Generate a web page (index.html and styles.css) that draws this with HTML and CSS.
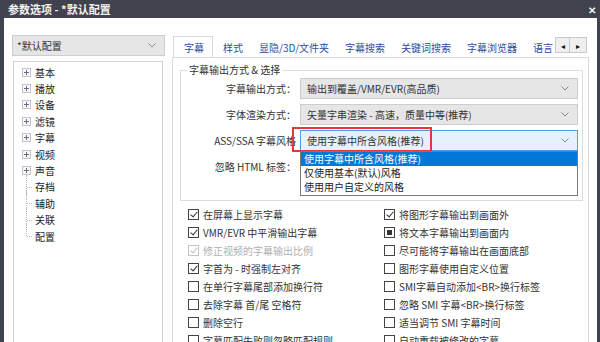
FILE: index.html
```html
<!DOCTYPE html>
<html lang="zh-CN">
<head>
    <meta charset="UTF-8">
    <title>参数选项 - *默认配置</title>
    <link rel="stylesheet" href="styles.css">
</head>
<body>
<div class="window">
    <div class="titlebar">
        <span class="title">参数选项 - *默认配置</span>
        <span class="close">✕</span>
    </div>
    <div class="client">
        <aside class="side">
            <div class="combo profile">
                <span>*默认配置</span>
                <svg class="chev" width="8" height="5" viewBox="0 0 8 5"><path d="M0.5 0.5 L4 4 L7.5 0.5" fill="none" stroke="#888" stroke-width="1"/></svg>
            </div>
            <ul class="tree">
                <li><i class="plus"></i>基本</li>
                <li><i class="plus"></i>播放</li>
                <li><i class="plus"></i>设备</li>
                <li><i class="plus"></i>滤镜</li>
                <li><i class="plus"></i>字幕</li>
                <li><i class="plus"></i>视频</li>
                <li><i class="plus"></i>声音</li>
                <li class="leaf"><i class="branch"></i>存档</li>
                <li class="leaf"><i class="branch"></i>辅助</li>
                <li class="leaf"><i class="branch"></i>关联</li>
                <li class="leaf last"><i class="branch"></i>配置</li>
            </ul>
        </aside>

        <main class="main">
            <div class="tabs">
                <div class="tab-list">
                    <div class="tab active">字幕</div>
                    <div class="tab">样式</div>
                    <div class="tab">显隐/3D/文件夹</div>
                    <div class="tab">字幕搜索</div>
                    <div class="tab">关键词搜索</div>
                    <div class="tab">字幕浏览器</div>
                    <div class="tab">语言</div>
                </div>
                <div class="tab-scroll">
                    <span class="arrow">&#9666;</span><span class="arrow">&#9656;</span>
                </div>
            </div>

            <div class="panel">
                <fieldset class="group">
                    <legend>字幕输出方式 &amp; 选择</legend>
                    <div class="row">
                        <label>字幕输出方式：</label>
                        <div class="combo">
                            <span>输出到覆盖/VMR/EVR(高品质)</span>
                            <svg class="chev" width="8" height="5" viewBox="0 0 8 5"><path d="M0.5 0.5 L4 4 L7.5 0.5" fill="none" stroke="#888" stroke-width="1"/></svg>
                        </div>
                    </div>
                    <div class="row">
                        <label>字体渲染方式：</label>
                        <div class="combo">
                            <span>矢量字串渲染 - 高速，质量中等(推荐)</span>
                            <svg class="chev" width="8" height="5" viewBox="0 0 8 5"><path d="M0.5 0.5 L4 4 L7.5 0.5" fill="none" stroke="#888" stroke-width="1"/></svg>
                        </div>
                    </div>
                    <div class="row">
                        <label>ASS/SSA 字幕风格</label>
                        <div class="combo open">
                            <span>使用字幕中所含风格(推荐)</span>
                            <svg class="chev" width="8" height="5" viewBox="0 0 8 5"><path d="M0.5 0.5 L4 4 L7.5 0.5" fill="none" stroke="#888" stroke-width="1"/></svg>
                            <div class="mark"></div>
                            <ul class="dropdown">
                                <li class="sel">使用字幕中所含风格(推荐)</li>
                                <li>仅使用基本(默认)风格</li>
                                <li>使用用户自定义的风格</li>
                            </ul>
                        </div>
                    </div>
                    <div class="row">
                        <label>忽略 HTML 标签：</label>
                        <div class="combo"></div>
                    </div>
                </fieldset>

                <div class="checks">
                    <div class="check"><i class="box on"></i>在屏幕上显示字幕</div>
                    <div class="check"><i class="box on"></i>将图形字幕输出到画面外</div>
                    <div class="check"><i class="box on"></i>VMR/EVR 中平滑输出字幕</div>
                    <div class="check"><i class="box mixed"></i>将文本字幕输出到画面内</div>
                    <div class="check disabled"><i class="box on"></i>修正视频的字幕输出比例</div>
                    <div class="check"><i class="box"></i>尽可能将字幕输出在画面底部</div>
                    <div class="check"><i class="box on"></i>字首为 - 时强制左对齐</div>
                    <div class="check"><i class="box"></i>图形字幕使用自定义位置</div>
                    <div class="check"><i class="box"></i>在单行字幕尾部添加换行符</div>
                    <div class="check"><i class="box"></i>SMI字幕自动添加&lt;BR&gt;换行标签</div>
                    <div class="check"><i class="box"></i>去除字幕 首/尾 空格符</div>
                    <div class="check"><i class="box"></i>忽略 SMI 字幕&lt;BR&gt;换行标签</div>
                    <div class="check"><i class="box"></i>删除空行</div>
                    <div class="check"><i class="box"></i>适当调节 SMI 字幕时间</div>
                    <div class="check"><i class="box"></i>字幕匹配失败则忽略匹配规则</div>
                    <div class="check"><i class="box"></i>自动重载被修改的字幕</div>
                </div>
            </div>
        </main>
    </div>
</div>
</body>
</html>
```

FILE: styles.css
```css
html, body {
    margin: 0;
    padding: 0;
    height: 342px;
    overflow: hidden;
}

body {
    background: #40424e;
    font-family: "Noto Sans CJK SC", "Liberation Sans", sans-serif;
    font-size: 10px;
    color: #333;
}

.window {
    display: flex;
    flex-direction: column;
    height: 342px;
}

.titlebar {
    height: 18px;
    display: flex;
    align-items: center;
    justify-content: space-between;
    padding: 0 4px 0 8px;
    color: #f2f2f2;
    font-size: 11px;
    font-weight: bold;
}
.titlebar .close {
    font-size: 10px;
    font-weight: bold;
}

.client {
    flex: 1;
    display: flex;
    background: #fff;
    margin: 0 3px 0 4px;
    min-height: 0;
}

/* left side */
.side {
    width: 168px;
    display: flex;
    flex-direction: column;
}

.combo {
    position: relative;
    height: 21px;
    box-sizing: border-box;
    border: 1px solid #cdcdcd;
    background: #e6e6e6;
    display: flex;
    align-items: center;
    padding: 0 6px;
    color: #333;
}
.combo span {
    flex: 1;
    white-space: nowrap;
}
.combo .chev {
    margin-right: 2px;
}

.profile {
    margin: 17px 0 0 8px;
    width: 153px;
    padding-left: 4px;
}

.tree {
    list-style: none;
    margin: 5px 0 0 9px;
    padding: 2px 0 0 8px;
    width: 150px;
    box-sizing: border-box;
    flex: 1;
    border: 1px solid #d2d2d2;
    border-bottom: none;
}
.tree li {
    height: 16.4px;
    display: flex;
    align-items: center;
    position: relative;
    color: #222;
}
.tree .plus {
    width: 7px;
    height: 7px;
    border: 1px solid #c4c4c4;
    margin-right: 4px;
    position: relative;
    background: #f7f7f7;
}
.tree .plus::before {
    content: "";
    position: absolute;
    left: 1px;
    top: 3px;
    width: 5px;
    height: 1px;
    background: #6a6a9a;
}
.tree .plus::after {
    content: "";
    position: absolute;
    left: 3px;
    top: 1px;
    width: 1px;
    height: 5px;
    background: #6a6a9a;
}
.tree .branch {
    width: 9px;
    height: 16.4px;
    margin-right: 4px;
    position: relative;
}
.tree .branch::before {
    content: "";
    position: absolute;
    left: 4px;
    top: -4px;
    height: 20.4px;
    border-left: 1px dotted #b8b8b8;
}
.tree .last .branch::before {
    height: 12px;
}
.tree .branch::after {
    content: "";
    position: absolute;
    left: 5px;
    top: 8px;
    width: 5px;
    border-top: 1px dotted #b8b8b8;
}

/* right side */
.main {
    flex: 1;
    display: flex;
    flex-direction: column;
    padding: 18px 8px 0 0;
    min-width: 0;
}

.tabs {
    display: flex;
    align-items: flex-start;
    height: 21px;
    padding-left: 1px;
}
.tab-list {
    flex: 1;
    min-width: 0;
    height: 21px;
    display: flex;
    align-items: flex-end;
    overflow: hidden;
}
.tab {
    height: 19px;
    line-height: 19px;
    padding: 0 8px;
    white-space: nowrap;
    color: #2b4ba0;
}
.tab.active {
    height: 21px;
    line-height: 21px;
    padding: 0 8px 0 10px;
    border: 1px solid #d9d9d9;
    border-bottom: none;
    background: #fff;
    box-sizing: border-box;
    margin-right: 2px;
}

.tab-scroll {
    display: flex;
    margin: 1px 2px 0 0;
}
.tab-scroll .arrow {
    width: 15px;
    height: 16px;
    box-sizing: border-box;
    border: 1px solid #c9c9c9;
    background: #efefef;
    display: flex;
    align-items: center;
    justify-content: center;
    font-size: 8px;
    color: #111;
}
.tab-scroll .arrow + .arrow {
    border-left: none;
    width: 17px;
}

.panel {
    flex: 1;
    border: 1px solid #d9d9d9;
    border-bottom: none;
    padding: 5px 5px 0 7px;
}

.group {
    margin: 0;
    padding: 1px 4px 23px 0;
    border: 1px solid #dcdcdc;
    display: flex;
    flex-direction: column;
    gap: 5px;
}
.group legend {
    padding: 0 2px;
    margin-left: 6px;
    line-height: 14px;
    color: #333;
}

.row {
    display: flex;
    align-items: center;
    gap: 4px;
}
.row label {
    width: 115px;
    text-align: right;
    white-space: nowrap;
}
.row .combo {
    width: 278px;
}

.combo.open {
    background: #e5f1fb;
    border-color: #4f9ee3;
}
.combo .mark {
    position: absolute;
    left: -9px;
    top: -4px;
    width: 140px;
    height: 25px;
    box-sizing: border-box;
    border: 2px solid #e23a3a;
}

.dropdown {
    position: absolute;
    left: -1px;
    top: 20px;
    width: 278px;
    box-sizing: border-box;
    list-style: none;
    margin: 0;
    padding: 0 0 1px;
    background: #fff;
    border: 1px solid #7a7a7a;
    z-index: 5;
}
.dropdown li {
    height: 14px;
    line-height: 14px;
    padding-left: 3px;
    color: #222;
}
.dropdown li.sel {
    background: #0078d7;
    color: #fff;
}

.checks {
    display: grid;
    grid-template-columns: 196px 1fr;
    padding: 4px 0 0 8px;
}
.check {
    height: 18px;
    display: flex;
    align-items: center;
    white-space: nowrap;
    color: #333;
}
.check.disabled {
    color: #b0b0b0;
}
.box {
    width: 11px;
    height: 11px;
    box-sizing: border-box;
    border: 1px solid #444;
    margin-right: 4px;
    position: relative;
    background: #fff;
}
.check.disabled .box {
    border-color: #c4c4c4;
}
.box.on::after {
    content: "";
    position: absolute;
    left: 3px;
    top: 0px;
    width: 3px;
    height: 6px;
    border: solid #333;
    border-width: 0 1.2px 1.2px 0;
    transform: rotate(40deg);
}
.check.disabled .box.on::after {
    border-color: #c0c0c0;
}
.box.mixed::after {
    content: "";
    position: absolute;
    left: 2px;
    top: 2px;
    width: 5px;
    height: 5px;
    background: #333;
}
```
